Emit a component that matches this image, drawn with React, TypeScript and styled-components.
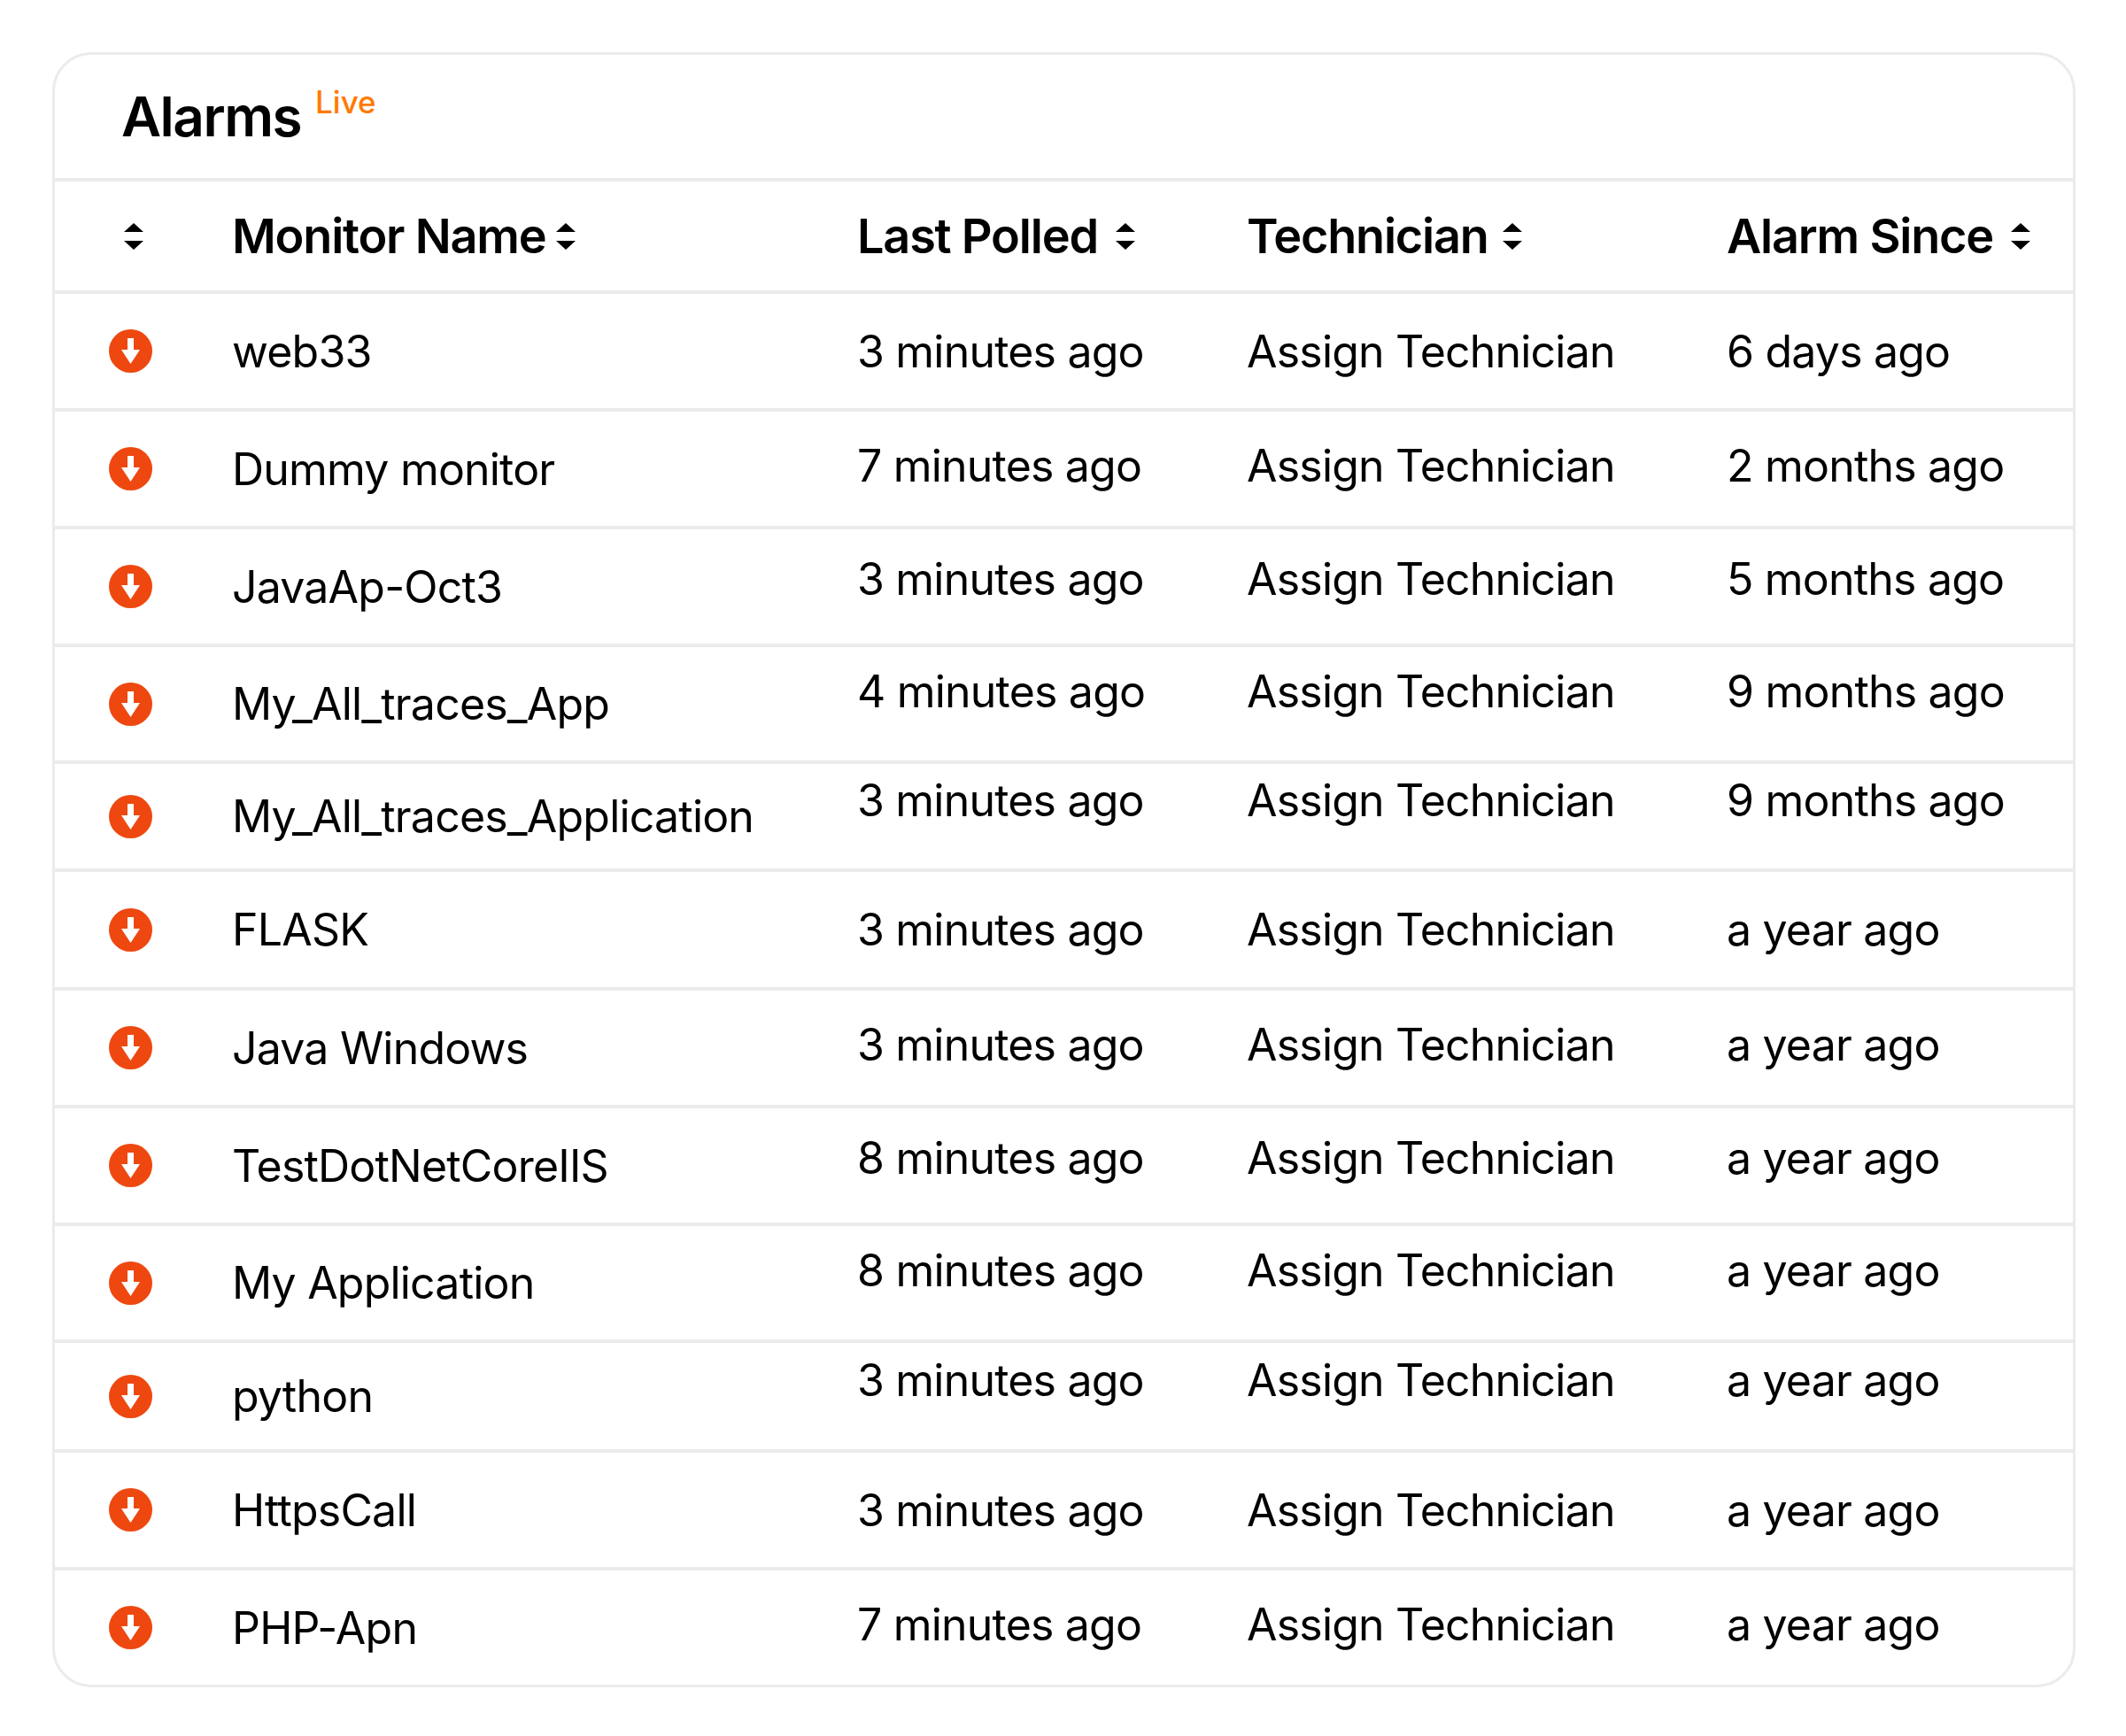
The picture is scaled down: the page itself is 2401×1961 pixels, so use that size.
import React from 'react';
import styled, { createGlobalStyle } from 'styled-components';

const GlobalStyle = createGlobalStyle`
    html, body {
        margin: 0;
        padding: 0;
        background: #fff;
    }
    body {
        font-family: "Inter", "Liberation Sans", sans-serif;
        color: #000;
    }
`;

const Page = styled.div`
    padding: 59px 57px 54px 59px;
`;

const Card = styled.section`
    border: 3px solid #ebebeb;
    border-radius: 44px;
    overflow: hidden;
`;

const CardHeader = styled.header`
    height: 139px;
    padding-left: 75px;
    display: flex;
    align-items: flex-start;
    box-sizing: border-box;
`;

const Title = styled.h2`
    margin: 33px 0 0;
    font-size: 62px;
    line-height: 74px;
    font-weight: 600;
    letter-spacing: -1.5px;
`;

const LiveBadge = styled.span`
    margin: 32px 0 0 16px;
    font-size: 35px;
    line-height: 42px;
    font-weight: 500;
    color: #ff7a00;
`;

const Row = styled.div<{ $height: number }>`
    display: grid;
    grid-template-columns: 200px 706px 440px 542px 1fr;
    height: ${(p) => p.$height}px;
    box-sizing: border-box;
    border-top: 4px solid #ebebeb;
    align-items: center;
`;

const HeadCell = styled.div`
    display: flex;
    align-items: center;
    font-size: 54px;
    font-weight: 600;
    letter-spacing: -1.2px;
    white-space: nowrap;
`;

const SortSlot = styled.div`
    display: flex;
    padding-left: 78px;
`;

const NameCell = styled.div`
    font-size: 50px;
    font-weight: 400;
    letter-spacing: -0.8px;
    white-space: nowrap;
`;

const InfoCell = styled(NameCell)<{ $lift: number }>`
    padding-bottom: ${(p) => p.$lift}px;
`;

const StatusSlot = styled.div`
    display: flex;
    padding-left: 61px;
`;

const SortIcon = styled.svg<{ $gap: number }>`
    width: 22px;
    height: 30px;
    margin-left: ${(p) => p.$gap}px;
    flex: none;
`;

const StatusIcon = styled.svg`
    width: 49px;
    height: 49px;
    display: block;
`;

const Sort: React.FC<{ gap?: number }> = ({ gap = 0 }) => (
    <SortIcon $gap={gap} viewBox="0 0 22 30" aria-hidden="true">
        <path d="M11 0 22 10H0Z M0 20H22L11 30Z" fill="#000" />
    </SortIcon>
);

const DownStatus: React.FC = () => (
    <StatusIcon viewBox="0 0 49 49" aria-hidden="true">
        <circle cx="24.5" cy="24.5" r="24.5" fill="#ee4810" />
        <path d="M21 10h7v13h7L24.5 39 14 23h7Z" fill="#fff" />
    </StatusIcon>
);

interface Alarm {
    name: string;
    polled: string;
    since: string;
    height: number;
    lift: number;
}

const alarms: Alarm[] = [
    { name: 'web33', polled: '3 minutes ago', since: '6 days ago', height: 133, lift: 0 },
    { name: 'Dummy monitor', polled: '7 minutes ago', since: '2 months ago', height: 133, lift: 8 },
    { name: 'JavaAp-Oct3', polled: '3 minutes ago', since: '5 months ago', height: 133, lift: 18 },
    { name: 'My_All_traces_App', polled: '4 minutes ago', since: '9 months ago', height: 132, lift: 28 },
    { name: 'My_All_traces_Application', polled: '3 minutes ago', since: '9 months ago', height: 122, lift: 36 },
    { name: 'FLASK', polled: '3 minutes ago', since: 'a year ago', height: 134, lift: 0 },
    { name: 'Java Windows', polled: '3 minutes ago', since: 'a year ago', height: 133, lift: 8 },
    { name: 'TestDotNetCoreIIS', polled: '8 minutes ago', since: 'a year ago', height: 133, lift: 18 },
    { name: 'My Application', polled: '8 minutes ago', since: 'a year ago', height: 132, lift: 28 },
    { name: 'python', polled: '3 minutes ago', since: 'a year ago', height: 124, lift: 36 },
    { name: 'HttpsCall', polled: '3 minutes ago', since: 'a year ago', height: 133, lift: 0 },
    { name: 'PHP-Apn', polled: '7 minutes ago', since: 'a year ago', height: 133, lift: 8 },
];

const App: React.FC = () => (
    <Page>
        <GlobalStyle />
        <Card>
            <CardHeader>
                <Title>Alarms</Title>
                <LiveBadge>Live</LiveBadge>
            </CardHeader>
            <Row $height={127}>
                <SortSlot>
                    <Sort />
                </SortSlot>
                <HeadCell>Monitor Name<Sort gap={12} /></HeadCell>
                <HeadCell>Last Polled<Sort gap={20} /></HeadCell>
                <HeadCell>Technician<Sort gap={16} /></HeadCell>
                <HeadCell>Alarm Since<Sort gap={20} /></HeadCell>
            </Row>
            {alarms.map((a) => (
                <Row key={a.name} $height={a.height}>
                    <StatusSlot>
                        <DownStatus />
                    </StatusSlot>
                    <NameCell>{a.name}</NameCell>
                    <InfoCell $lift={a.lift}>{a.polled}</InfoCell>
                    <InfoCell $lift={a.lift}>Assign Technician</InfoCell>
                    <InfoCell $lift={a.lift}>{a.since}</InfoCell>
                </Row>
            ))}
        </Card>
    </Page>
);

export default App;
